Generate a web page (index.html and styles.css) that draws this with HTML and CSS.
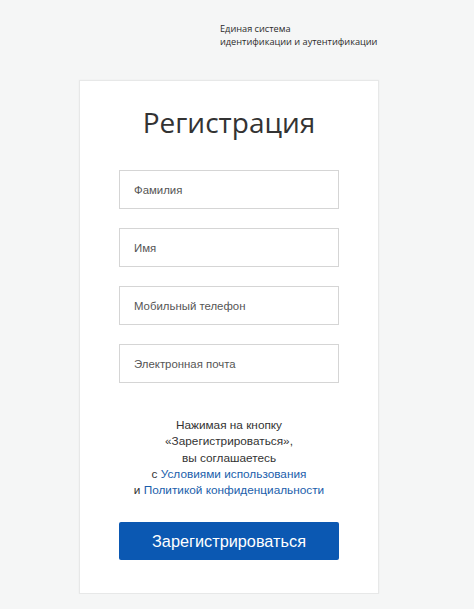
FILE: index.html
```html
<!DOCTYPE html>
<html lang="ru">
<head>
<meta charset="utf-8">
<title>Регистрация</title>
<link rel="stylesheet" href="styles.css">
</head>
<body>
<header class="brand">
  <div class="brand-text">Единая система<br>идентификации и аутентификации</div>
</header>
<main class="card">
  <h1 class="title">Регистрация</h1>
  <form class="form">
    <input class="field" type="text" placeholder="Фамилия">
    <input class="field" type="text" placeholder="Имя">
    <input class="field" type="text" placeholder="Мобильный телефон">
    <input class="field" type="text" placeholder="Электронная почта">
  </form>
  <p class="terms">Нажимая на кнопку<br>«Зарегистрироваться»,<br>вы соглашаетесь<br>с <a href="#" class="link">Условиями использования</a><br>и <a href="#" class="link">Политикой конфиденциальности</a></p>
  <button class="submit" type="button">Зарегистрироваться</button>
</main>
</body>
</html>
```
FILE: styles.css
```css
html, body {
  margin: 0;
  padding: 0;
  background: #f5f6f6;
}
body {
  font-family: "Liberation Sans", Arial, sans-serif;
  color: #333;
}
.brand {
  padding: 22px 0 0 220px;
  height: 80px;
  box-sizing: border-box;
}
.brand-text {
  font-family: "Open Sans", "Noto Sans", sans-serif;
  font-size: 9.2px;
  line-height: 13px;
  color: #2b2b2b;
}
.card {
  width: 300px;
  margin-left: 79px;
  box-sizing: border-box;
  background: #fff;
  border: 1px solid #e7e8e8;
  box-shadow: 0 0 2px rgba(0,0,0,0.04);
  padding: 23px 39px 33px;
  display: flex;
  flex-direction: column;
}
.title {
  margin: 0;
  font-family: "Open Sans", "Noto Sans", sans-serif;
  font-weight: 400;
  font-size: 28px;
  line-height: 36px;
  text-align: center;
  color: #333;
}
.form {
  margin-top: 30px;
  display: flex;
  flex-direction: column;
  gap: 19px;
}
.field {
  height: 39px;
  box-sizing: border-box;
  border: 1px solid #d5d5d5;
  border-radius: 0;
  padding: 0 14px;
  font-family: "Liberation Sans", Arial, sans-serif;
  font-size: 11.4px;
  color: #333;
  background: #fff;
  outline: none;
}
.field::placeholder {
  color: #555;
  opacity: 1;
}
.terms {
  margin: 34px 0 0;
  font-size: 11.8px;
  line-height: 16.25px;
  text-align: center;
  color: #333;
}
.link {
  color: #1a5eab;
  text-decoration: none;
}
.submit {
  margin-top: 24px;
  height: 38px;
  border: 0;
  border-radius: 2px;
  background: #0b58b2;
  color: #fff;
  font-family: "Liberation Sans", Arial, sans-serif;
  font-size: 16.3px;
  cursor: pointer;
}
```
